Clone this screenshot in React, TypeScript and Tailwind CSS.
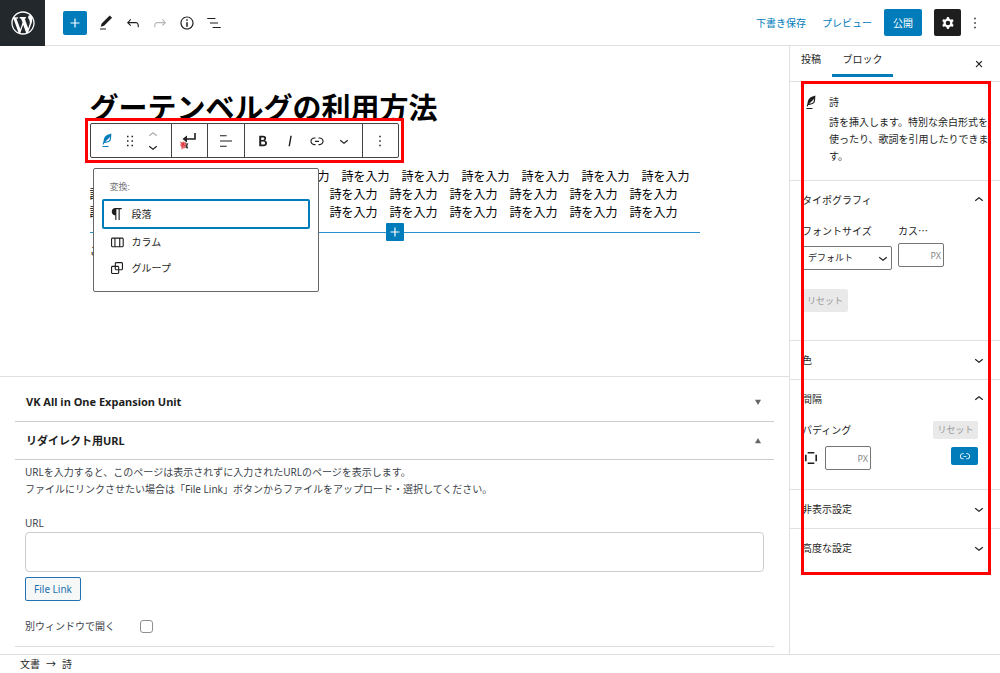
import React, { useState } from 'react';

const ICONS = {
  wordpress:
    'M20 10c0-5.51-4.49-10-10-10C4.48 0 0 4.49 0 10c0 5.52 4.48 10 10 10 5.51 0 10-4.48 10-10zM7.78 15.37L4.37 6.22c.55-.02 1.17-.08 1.17-.08.5-.06.44-1.13-.06-1.11 0 0-1.45.11-2.37.11-.18 0-.37 0-.58-.01C4.12 2.69 6.87 1.11 10 1.11c2.33 0 4.45.87 6.05 2.34-.68-.11-1.65.39-1.65 1.58 0 .74.45 1.36.9 2.1.35.61.55 1.36.55 2.46 0 1.49-1.4 5-1.4 5l-3.03-8.37c.54-.02.82-.17.82-.17.5-.05.44-1.25-.06-1.22 0 0-1.44.12-2.38.12-.87 0-2.33-.12-2.33-.12-.5-.03-.56 1.2-.06 1.22l.92.08 1.26 3.41zM17.41 10c.24-.64.74-1.87.43-4.25.7 1.29 1.05 2.71 1.05 4.25 0 3.29-1.73 6.24-4.4 7.78.97-2.59 1.94-5.2 2.92-7.78zM6.1 18.09C3.12 16.65 1.11 13.53 1.11 10c0-1.3.23-2.48.72-3.59C3.25 10.3 4.67 14.2 6.1 18.09zm4.03-6.63l2.58 6.98c-.86.29-1.76.45-2.71.45-.79 0-1.57-.11-2.29-.33.81-2.38 1.62-4.74 2.42-7.1z',
  plus: 'M18 11.2h-5.2V6h-1.6v5.2H6v1.6h5.2V18h1.6v-5.2H18z',
  pencil: 'M20.1 5.1L16.9 2 6.2 12.7l-1.3 4.4 4.5-1.3L20.1 5.1zM4 20.8h8v-1.5H4v1.5z',
  undo: 'M18.3 11.7c-.6-.6-1.4-.9-2.3-.9H6.7l2.9-3.3-1.1-1-4.5 5L8.5 16l1-1-2.7-2.7H16c.5 0 .9.2 1.3.5 1 1 1 3.4 1 4.5v.3h1.5v-.2c0-1.5 0-4.3-1.5-5.7z',
  redo: 'M15.6 6.5l-1.1 1 2.9 3.3H8c-.9 0-1.7.3-2.3.9-1.4 1.5-1.4 4.2-1.4 5.6v.2h1.5v-.3c0-1.1 0-3.5 1-4.5.3-.3.7-.5 1.3-.5h9.2L14.5 15l1.1 1.1 4.6-4.6-4.6-5z',
  info: 'M12 3.2c-4.8 0-8.8 3.9-8.8 8.8 0 4.8 3.9 8.8 8.8 8.8 4.8 0 8.8-3.9 8.8-8.8 0-4.8-4-8.8-8.8-8.8zm0 16c-4 0-7.2-3.3-7.2-7.2C4.8 8 8 4.8 12 4.8s7.2 3.3 7.2 7.2c0 4-3.2 7.2-7.2 7.2zM11 17h2v-6h-2v6zm0-8h2V7h-2v2z',
  listView: 'M13.8 5.2H3v1.5h10.8V5.2zm-3.6 12v1.5H21v-1.5H10.2zm7.2-6H6.6v1.5h10.8v-1.5z',
  cog: 'M10.289 4.836A1 1 0 0111.275 4h1.306a1 1 0 01.987.836l.244 1.466c.787.26 1.503.679 2.108 1.218l1.393-.522a1 1 0 011.216.437l.653 1.13a1 1 0 01-.23 1.273l-1.148.944a6.025 6.025 0 010 2.435l1.149.946a1 1 0 01.23 1.272l-.653 1.13a1 1 0 01-1.216.437l-1.394-.522c-.605.54-1.32.958-2.108 1.218l-.244 1.466a1 1 0 01-.987.836h-1.306a1 1 0 01-.986-.836l-.244-1.466a5.995 5.995 0 01-2.108-1.218l-1.394.522a1 1 0 01-1.217-.436l-.653-1.131a1 1 0 01.23-1.272l1.149-.946a6.026 6.026 0 010-2.435l-1.148-.944a1 1 0 01-.23-1.272l.653-1.131a1 1 0 011.217-.437l1.393.522a5.994 5.994 0 012.108-1.218l.244-1.466zM14.929 12a3 3 0 11-6 0 3 3 0 016 0z',
  more: 'M13 19h-2v-2h2v2zm0-6h-2v-2h2v2zm0-6h-2V5h2v2z',
  drag: 'M8 7h2V5H8v2zm0 6h2v-2H8v2zm0 6h2v-2H8v2zm6-14v2h2V5h-2zm0 8h2v-2h-2v2zm0 6h2v-2h-2v2z',
  verse:
    'M17.8 2l-.9.3c-.1 0-3.6 1-5.2 2.1C10 5.5 9.3 6.5 8.9 7.1c-.6.9-1.7 4.7-1.7 6.3l-.9 2.3c-.2.4 0 .8.4 1 .1 0 .2.1.3.1.3 0 .6-.2.7-.5l.6-1.5c.3 0 .7-.1 1.2-.2.7-.1 1.4-.3 2.2-.5.8-.2 1.6-.5 2.4-.8.7-.3 1.4-.7 1.9-1.2s.8-1.2 1-1.9c.2-.7.3-1.6.4-2.4.1-.8.1-1.7.2-2.5 0-.8.1-1.5.2-2.1V2zm-1.9 5.6c-.1.8-.2 1.5-.3 2.1-.2.6-.4 1-.6 1.3-.3.3-.8.6-1.4.9-.7.3-1.4.5-2.2.8-.6.2-1.3.3-1.8.4L15 7.5c.3-.3.6-.7 1-1.1 0 .4 0 .8-.1 1.2zM6 20h8v-1.5H6V20z',
  down: 'M17.5 11.6L12 16l-5.5-4.4.9-1.2L12 14l4.5-3.6 1 1.2z',
  up: 'M6.5 12.4L12 8l5.5 4.4-.9 1.2L12 10l-4.5 3.6-1-1.2z',
  align: 'M4 19.8h8.9v-1.5H4v1.5zm8.9-15.6H4v1.5h8.9V4.2zm-8.9 7v1.5h16v-1.5H4z',
  bold: 'M14.7 11.3c1-.6 1.5-1.6 1.5-3 0-2.3-1.3-3.4-4-3.4H7v14h5.8c1.4 0 2.5-.3 3.3-1 .8-.7 1.2-1.7 1.2-2.9.1-1.9-.8-3.1-2.6-3.7zm-5.1-4h2.3c.6 0 1.1.1 1.4.4.3.3.5.7.5 1.2s-.2 1-.5 1.2c-.3.3-.8.4-1.4.4H9.6V7.3zm4.6 9c-.4.3-1 .4-1.7.4H9.6v-3.9h2.9c.7 0 1.3.2 1.7.5.4.3.6.8.6 1.5s-.2 1.2-.6 1.5z',
  italic: 'M12.5 5L10 19h1.9l2.5-14z',
  link: 'M15.6 7.2H14v1.5h1.6c2 0 3.7 1.7 3.7 3.7s-1.7 3.7-3.7 3.7H14v1.5h1.6c2.8 0 5.2-2.3 5.2-5.2 0-2.9-2.3-5.2-5.2-5.2zM4.7 12.4c0-2 1.7-3.7 3.7-3.7H10V7.2H8.4c-2.9 0-5.2 2.3-5.2 5.2 0 2.9 2.3 5.2 5.2 5.2H10v-1.5H8.4c-2 0-3.7-1.7-3.7-3.7zm4.6.9h5.3v-1.5H9.3v1.5z',
  paragraph: 'M18.3 4H9.9v-.1l-.9.2c-2.3.4-4 2.4-4 4.8s1.7 4.4 4 4.8l.7.1V20h1.5V5.5h2.9V20h1.5V5.5h2.7V4z',
  columns:
    'M19 6H6c-1.1 0-2 .9-2 2v9c0 1.1.9 2 2 2h13c1.1 0 2-.9 2-2V8c0-1.1-.9-2-2-2zm-4.1 1.5v10H10v-10h4.9zM5.5 17V8c0-.3.2-.5.5-.5h2.5v10H6c-.3 0-.5-.2-.5-.5zm14 0c0 .3-.2.5-.5.5h-2.6v-10H19c.3 0 .5.2.5.5v9z',
  group:
    'M18 4h-7c-1.1 0-2 .9-2 2v3H6c-1.1 0-2 .9-2 2v7c0 1.1.9 2 2 2h7c1.1 0 2-.9 2-2v-3h3c1.1 0 2-.9 2-2V6c0-1.1-.9-2-2-2zm-4.5 14c0 .3-.2.5-.5.5H6c-.3 0-.5-.2-.5-.5v-7c0-.3.2-.5.5-.5h3V13c0 1.1.9 2 2 2h2.5v3zm0-4.5H11c-.3 0-.5-.2-.5-.5v-2.5H13c.3 0 .5.2.5.5v2.5zm5-.5c0 .3-.2.5-.5.5h-3V11c0-1.1-.9-2-2-2h-2.5V6c0-.3.2-.5.5-.5h7c.3 0 .5.2.5.5v7z',
  close: 'M13 11.9l3.3-3.4-1.1-1-3.2 3.3-3.2-3.3-1.1 1 3.3 3.4-3.5 3.6 1 1L12 13l3.5 3.5 1-1z',
  sides: 'M7 3h10v2.4H7zM7 18.6h10V21H7zM3 7h2.4v10H3zM18.6 7H21v10h-2.4z',
};

interface IconProps {
  name: keyof typeof ICONS;
  className?: string;
}

const Icon: React.FC<IconProps> = ({ name, className = 'size-[18px]' }) => (
  <svg
    viewBox={name === 'wordpress' ? '-2 -2 24 24' : '0 0 24 24'}
    fill="currentColor"
    fillRule="evenodd"
    className={`shrink-0 ${className}`}
    aria-hidden="true"
  >
    <path d={ICONS[name]} />
  </svg>
);

interface IconButtonProps extends IconProps {
  label: string;
  buttonClass?: string;
}

const IconButton: React.FC<IconButtonProps> = ({ name, label, className, buttonClass = 'w-[27px] h-[27px]' }) => (
  <button type="button" aria-label={label} className={`flex shrink-0 items-center justify-center ${buttonClass}`}>
    <Icon name={name} className={className} />
  </button>
);

const EditorHeader: React.FC = () => (
  <header className="flex h-[46px] items-center border-b border-[#e0e0e0] pr-3">
    <a href="#" aria-label="WordPress" className="flex h-[46px] w-[45px] items-center justify-center bg-[#23282d] text-white">
      <Icon name="wordpress" className="size-[28px]" />
    </a>
    <div className="flex flex-1 items-center pl-[18px]">
      <IconButton name="plus" label="ブロックを追加" buttonClass="size-6 rounded-[2px] bg-[#007cba] text-white mr-[5px]" />
      <IconButton name="pencil" label="ツール" />
      <IconButton name="undo" label="元に戻す" />
      <IconButton name="redo" label="やり直す" buttonClass="size-[27px] text-[#b5b5b5]" />
      <IconButton name="info" label="詳細" />
      <IconButton name="listView" label="リスト表示" />
    </div>
    <div className="flex items-center">
      <button type="button" className="text-[#007cba]">下書き保存</button>
      <button type="button" className="ml-4 text-[#007cba]">プレビュー</button>
      <button type="button" className="ml-3 h-[27px] w-[38px] rounded-[2px] bg-[#007cba] text-white">公開</button>
      <IconButton name="cog" label="設定" buttonClass="ml-3 size-[27px] rounded-[2px] bg-[#1e1e1e] text-white" />
      <IconButton name="more" label="オプション" />
    </div>
  </header>
);

const TransformIcon: React.FC = () => (
  <svg viewBox="0 0 24 24" className="size-6" aria-hidden="true">
    <path d="M18 4v6H8" fill="none" stroke="#1e1e1e" strokeWidth="1.6" />
    <path d="M5.5 10l4.5-3.4v6.8z" fill="#1e1e1e" />
    <path d="M8 12.5l1.2 2 2.3-.3-1.2 2.2 1 3.4-2.8-1z" fill="#333" />
    <path d="M3 12.5l2.2.8 1.8-1 1 2 2 .6-1.6 1.6-.2 2.8-2 .2-1.6 1.2-.2-2.8-1.4-2 .8-1.2z" fill="#ee6a70" />
    <path d="M4.5 14l3.5 3M7 13.5L5 18" stroke="#c22" strokeWidth=".7" />
  </svg>
);

const BlockToolbar: React.FC = () => (
  <div className="absolute top-[72px] -left-[5px] z-20 border-3 border-[#f00] bg-white p-[2px]">
    <div className="flex h-[35px] divide-x divide-[#444] rounded-[2px] border border-[#444]">
      <div className="flex w-[81px] items-center pl-[3px]">
        <IconButton name="verse" label="詩" buttonClass="size-[27px] text-[#007cba]" />
        <IconButton name="drag" label="ドラッグ" buttonClass="h-[27px] w-[18px]" />
        <div className="flex flex-col">
          <IconButton name="up" label="上に移動" buttonClass="h-3 w-[28px] text-[#aaa]" />
          <IconButton name="down" label="下に移動" buttonClass="h-3 w-[28px]" />
        </div>
      </div>
      <button type="button" aria-label="ブロックタイプを変更" className="flex w-9 items-center justify-center">
        <TransformIcon />
      </button>
      <IconButton name="align" label="テキストの配置" buttonClass="w-[37px]" />
      <div className="flex w-[118px] items-center justify-center">
        <IconButton name="bold" label="太字" />
        <IconButton name="italic" label="イタリック" />
        <IconButton name="link" label="リンク" />
        <IconButton name="down" label="さらに表示" />
      </div>
      <IconButton name="more" label="オプション" buttonClass="w-[35px]" />
    </div>
  </div>
);

const transforms: { icon: keyof typeof ICONS; label: string }[] = [
  { icon: 'paragraph', label: '段落' },
  { icon: 'columns', label: 'カラム' },
  { icon: 'group', label: 'グループ' },
];

const TransformMenu: React.FC = () => (
  <div className="absolute top-[122px] left-[3px] z-10 h-[124px] w-[226px] rounded-[2px] border border-[#666] bg-white px-2 pt-3">
    <p className="px-2 text-[9px] leading-3 text-[#757575]">変換:</p>
    <ul className="mt-[6px]">
      {transforms.map((item, i) => (
        <li key={item.label}>
          <button
            type="button"
            className={`flex w-full items-center gap-[6px] rounded-[2px] ${
              i === 0 ? 'h-[30px] border-2 border-[#007cba] px-1' : 'h-[26px] px-[6px]'
            }`}
          >
            <Icon name={item.icon} />
            {item.label}
          </button>
        </li>
      ))}
    </ul>
  </div>
);

const verseLine = (n: number) => Array(n).fill('詩を入力').join('　');

const Canvas: React.FC = () => (
  <div className="flex-1 pb-28">
    <div className="relative mx-auto w-full max-w-[610px] pt-11">
      <h1 className="text-[29px] leading-9 font-bold text-black">グーテンベルグの利用方法</h1>
      <pre className="mt-[42px] font-[inherit] text-[12px] leading-[18px] text-black">
        {`　${verseLine(10)}\n${verseLine(10)}\n${verseLine(10)}`}
      </pre>
      <div className="mt-px flex h-[18px] items-center">
        <span className="h-px flex-1 bg-[#2a8fca]" />
        <IconButton name="plus" label="ブロックを追加" buttonClass="size-[18px] rounded-[1px] bg-[#007cba] text-white" />
        <span className="h-px flex-1 bg-[#2a8fca]" />
      </div>
      <p className="mt-[2px] text-[12px] leading-[18px]">こ</p>
      <BlockToolbar />
      <TransformMenu />
    </div>
  </div>
);

const MetaBoxes: React.FC = () => {
  const [newWindow, setNewWindow] = useState(false);

  return (
    <section className="border-t border-[#e0e0e0] px-[15px] pt-[5px] pb-[7px]">
      <h2 className="flex h-10 items-center justify-between border-b border-[#ccc] pr-[13px] pl-[11px] text-[11px] font-bold">
        VK All in One Expansion Unit
        <svg viewBox="0 0 8 8" className="size-[6px]" fill="#666"><path d="M0 1h8L4 8z" /></svg>
      </h2>
      <h2 className="flex h-[38px] items-center justify-between border-b border-[#ccc] pr-[13px] pl-[11px] text-[11px] font-bold">
        リダイレクト用URL
        <svg viewBox="0 0 8 8" className="size-[6px]" fill="#666"><path d="M0 7h8L4 0z" /></svg>
      </h2>
      <div className="border-b border-[#ddd] px-[10px] pt-1 pb-[11px] text-[#3c434a]">
        <p className="leading-[17px]">
          URLを入力すると、このページは表示されずに入力されたURLのページを表示します。
          <br />
          ファイルにリンクさせたい場合は「File Link」ボタンからファイルをアップロード・選択してください。
        </p>
        <label htmlFor="redirect-url" className="mt-[17px] block leading-[17px]">URL</label>
        <input id="redirect-url" type="text" className="block h-10 w-full rounded-[4px] border border-[#ccc] px-2" />
        <button type="button" className="mt-[5px] h-6 w-14 rounded-[2px] border border-[#2271b1] bg-[#f6f7f7] text-[#2271b1]">
          File Link
        </button>
        <div className="mt-[17px] flex items-center">
          <label htmlFor="new-window" className="w-[115px] leading-[17px]">別ウィンドウで開く</label>
          <input
            id="new-window"
            type="checkbox"
            checked={newWindow}
            onChange={(e) => setNewWindow(e.target.checked)}
            className="size-[13px] appearance-none rounded-[3px] border border-[#8c8f94] checked:bg-[#007cba]"
          />
        </div>
      </div>
    </section>
  );
};

interface PanelProps {
  title: string;
  open?: boolean;
  children?: React.ReactNode;
}

const Panel: React.FC<PanelProps> = ({ title, open = false, children }) => (
  <section>
    <h2>
      <button type="button" aria-expanded={open} className="flex h-[38px] w-full items-center justify-between px-3">
        {title}
        <Icon name={open ? 'up' : 'down'} />
      </button>
    </h2>
    {children}
  </section>
);

const Sidebar: React.FC = () => (
  <aside className="relative w-[211px] shrink-0 border-l border-[#e0e0e0]">
    <div className="flex h-9 items-start border-b border-[#e0e0e0] pr-2">
      <button type="button" className="h-[31px] w-[42px] pb-[5px]">投稿</button>
      <button type="button" className="h-[31px] w-[61px] border-b-3 border-[#007cba] pb-[2px]">ブロック</button>
      <IconButton name="close" label="設定を閉じる" buttonClass="ml-auto h-[35px] w-[27px]" />
    </div>

    <div className="divide-y divide-[#e0e0e0]">
      <div className="flex gap-[9px] pt-3 pr-[10px] pb-[15px] pl-3">
        <Icon name="verse" />
        <div className="leading-[17px]">
          <h2>詩</h2>
          <p className="mt-[3px]">詩を挿入します。特別な余白形式を使ったり、歌詞を引用したりできます。</p>
        </div>
      </div>

      <Panel title="タイポグラフィ" open>
        <div className="px-3 pb-7">
          <div className="flex gap-[6px] pt-1">
            <div className="w-[90px]">
              <label htmlFor="font-size" className="block leading-4">フォントサイズ</label>
              <div className="relative mt-[7px]">
                <select id="font-size" className="h-6 w-full appearance-none rounded-[2px] border border-[#757575] px-[5px] text-[9px]">
                  <option>デフォルト</option>
                </select>
                <Icon name="down" className="pointer-events-none absolute top-[3px] right-0 size-[18px]" />
              </div>
            </div>
            <div className="w-[46px]">
              <label htmlFor="custom-size" className="block font-['Noto_Sans_CJK_JP',sans-serif] leading-4">カス…</label>
              <input
                id="custom-size"
                type="text"
                placeholder="PX"
                className="mt-1 block h-6 w-full rounded-[2px] border border-[#757575] px-[2px] text-right text-[9px] placeholder:text-[#888]"
              />
            </div>
          </div>
          <button type="button" className="mt-[19px] h-[23px] w-[46px] rounded-[2px] bg-[#e9e9e9] text-[9px] text-[#999]">リセット</button>
        </div>
      </Panel>

      <Panel title="色" />

      <Panel title="間隔" open>
        <div className="pt-[3px] pr-[22px] pb-[19px] pl-3">
          <div className="flex items-center justify-between">
            <span>パディング</span>
            <button type="button" className="h-[18px] w-[45px] rounded-[2px] bg-[#e9e9e9] text-[9px] text-[#999]">リセット</button>
          </div>
          <div className="mt-[7px] flex items-start">
            <Icon name="sides" className="mx-px mt-1 size-4" />
            <input
              type="text"
              aria-label="パディング"
              placeholder="PX"
              className="ml-[5px] h-6 w-[46px] rounded-[2px] border border-[#757575] px-[2px] text-right text-[9px] placeholder:text-[#888]"
            />
            <IconButton name="link" label="個別に設定" className="size-[14px]" buttonClass="mt-px ml-auto h-[18px] w-[27px] rounded-[2px] bg-[#007cba] text-white" />
          </div>
        </div>
      </Panel>

      <Panel title="非表示設定" />
      <Panel title="高度な設定" />
    </div>

    {/* Highlight frame around the block settings */}
    <div className="pointer-events-none absolute top-[35px] left-[11px] h-[494px] w-[190px] border-3 border-[#f00]" />
  </aside>
);

const App: React.FC = () => (
  <div className="flex min-h-screen flex-col bg-white font-['Noto_Sans','Noto_Sans_CJK_JP',sans-serif] text-[10px] leading-4 text-[#1e1e1e]">
    <EditorHeader />
    <div className="flex flex-1">
      <main className="flex min-w-0 flex-1 flex-col">
        <Canvas />
        <MetaBoxes />
      </main>
      <Sidebar />
    </div>
    <footer className="flex h-[19px] items-center gap-[6px] border-t border-[#e0e0e0] px-5">
      <span>文書</span>
      <span>→</span>
      <span>詩</span>
    </footer>
  </div>
);

export default App;
